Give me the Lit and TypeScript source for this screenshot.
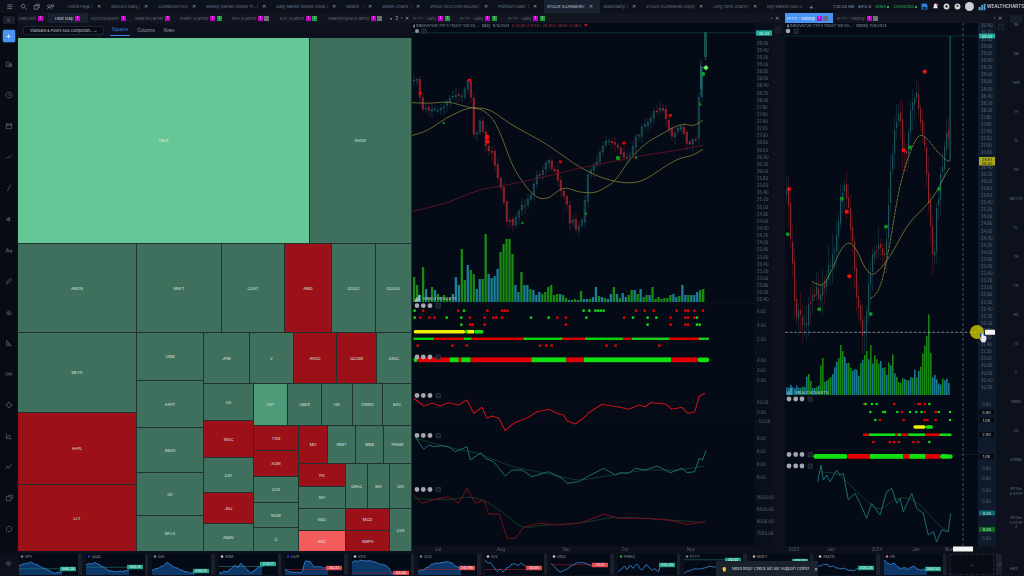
import { LitElement, html, svg, css, nothing } from "lit";
import { customElement } from "lit/decorators.js";

type P = [number, number];
const mk = (ox: number, oy: number) => (a: number[]): P[] => {
  const r: P[] = [];
  for (let i = 0; i < a.length; i += 2) r.push([ox + a[i] / 3, oy + a[i + 1] / 3]);
  return r;
};
const z5 = mk(412, 30), z6 = mk(412, 290), z7 = mk(775, 20), z8 = mk(775, 290);
const lerp = (pts: P[], x: number) => {
  if (x <= pts[0][0]) return pts[0][1];
  for (let i = 1; i < pts.length; i++) {
    if (x <= pts[i][0]) {
      const t = (x - pts[i - 1][0]) / (pts[i][0] - pts[i - 1][0]);
      return pts[i - 1][1] + t * (pts[i][1] - pts[i - 1][1]);
    }
  }
  return pts[pts.length - 1][1];
};
const seed = (s: number) => () => {
  s = (s + 0x6d2b79f5) | 0;
  let t = Math.imul(s ^ (s >>> 15), 1 | s);
  t = (t + Math.imul(t ^ (t >>> 7), 61 | t)) ^ t;
  return ((t ^ (t >>> 14)) >>> 0) / 4294967296;
};
const smooth = (pts: P[], step = 3): P[] => {
  const o: P[] = [];
  for (let x = pts[0][0]; x <= pts[pts.length - 1][0]; x += step) {
    let sum = 0, n = 0;
    for (let d = -6; d <= 6; d += 3) { sum += lerp(pts, Math.min(pts[pts.length - 1][0], Math.max(pts[0][0], x + d))); n++; }
    o.push([x, sum / n]);
  }
  return o;
};
const line = (pts: P[], c: string, w = 0.7, extra = "") =>
  svg`<polyline points=${pts.map((p) => p[0].toFixed(1) + "," + p[1].toFixed(1)).join(" ")} fill="none" stroke=${c} stroke-width=${w} stroke-dasharray=${extra || "none"} stroke-linejoin="round"></polyline>`;
const RED = "#e80000", GRN = "#10d810";
const dots = (y: number, ox: number, red: number[], grn: number[], r = 1.35) => svg`
  ${red.map((x) => svg`<circle cx=${ox + x / 3} cy=${y} r=${r} fill=${RED}></circle>`)}
  ${grn.map((x) => svg`<circle cx=${ox + x / 3} cy=${y} r=${r} fill=${GRN}></circle>`)}`;
const band = (y: number, ox: number, segs: [number, number, string][]) =>
  segs.map(([a, b, c]) => {
    const out = [];
    for (let x = a; x < b; x += 6) out.push(svg`<rect x=${ox + x / 3} y=${y - 1.2} width="2.2" height="2.4" rx="0.7" fill=${c}></rect>`);
    return out;
  });
const bar = (y: number, ox: number, h: number, segs: [number, number, string][]) =>
  segs.map(([a, b, c], i) => svg`<rect x=${ox + a / 3} y=${y - h / 2} width=${(b - a) / 3} height=${h} rx=${i === 0 || i === segs.length - 1 ? h / 2 : 0} fill=${c}></rect>`);
const cluster = (xs: number[], y: number, sq: number) => svg`
  ${xs.map((x) => svg`<circle cx=${x} cy=${y} r="2.4" fill="#a4a8ae"></circle>`)}
  <rect x=${sq - 2} y=${y - 2} width="4.4" height="4.4" fill="#181e2a" stroke="#3c4350" stroke-width="0.5"></rect>`;
const axLabels = (x: number, items: [string, number][]) =>
  items.map(([t, y]) => svg`<text class="ax" x=${x} y=${y + 1.6}>${t}</text>`);
const tag = (x: number, y: number, w: number, h: number, t: string, bg: string, fg = "#06201c") => svg`
  <rect x=${x} y=${y - h / 2} width=${w} height=${h} fill=${bg}></rect>
  <text class="tg" x=${x + w / 2} y=${y + 1.6} text-anchor="middle" fill=${fg}>${t}</text>`;

/* -------------- daily chart data ------------- */
const dailyClose = z5([5,150,15,140,25,240,45,240,70,240,100,220,120,195,150,200,165,150,175,210,185,340,205,260,215,340,240,380,270,490,280,570,300,580,320,540,350,510,370,440,410,395,430,440,460,520,470,570,490,590,510,570,525,440,550,400,570,340,610,340,620,370,650,380,665,330,690,295,720,255,745,235,775,320,800,285,825,350,850,320,860,180,872,100]);
const dailyCandles = (() => {
  const r = seed(11), out: any[] = [];
  let prev = lerp(dailyClose, 412);
  for (let x = 413; x < 703; x += 3) {
    const c = lerp(dailyClose, x) + (r() - 0.5) * 6;
    const o = prev + (r() - 0.5) * 3;
    const hi = Math.min(o, c) - 2 - r() * 5, lo = Math.max(o, c) + 2 + r() * 6;
    out.push(svg`<line x1=${x + 1} x2=${x + 1} y1=${hi} y2=${lo} stroke=${c > o ? "#6a1c24" : "#1a4c54"} stroke-width="0.6"></line>
      <rect x=${x} y=${Math.min(o, c)} width="1.8" height=${Math.max(1, Math.abs(c - o))} fill=${c > o ? "#7c1a24" : "#103a40"} stroke=${c > o ? "#a82a34" : "#215c63"} stroke-width="0.4"></rect>`);
    prev = c;
  }
  return out;
})();
const dailyVol = [25,17,7,35,13,5,15,12,8,5,7,3,4,8,25,17,53,22,37,32,28,13,23,23,68,28,24,26,33,50,58,63,63,48,17,10,30,17,17,13,12,7,10,8,10,15,17,7,8,8,7,4,2,2,3,2,11,3,3,3,5,15,6,5,4,3,8,15,8,4,9,5,7,12,12,8,13,5,7,7,15,3,5,3,4,4,7,8,5,6,17,7,7,7,7,10,12,13];
const dailyVolBars = (() => {
  const r = seed(5);
  return dailyVol.map((h, i) => {
    const teal = h < 50 && r() < 0.5 && h !== 68;
    return svg`<rect x=${413 + i * 2.98} y=${302 - h} width="2.3" height=${h} fill=${teal ? "#1b7f96" : "#1a8a12"}></rect>`;
  });
})();
const dailyAxis: [string, number][] = (() => {
  const a: [string, number][] = [];
  for (let i = 0; i < 37; i++) a.push([(29.6 - i * 0.2).toFixed(2), 43 + i * 7.13]);
  return a;
})();

/* -------------- weekly chart data ------------- */
const wkClose: P[] = [[787,197],[790,233],[793,290],[797,315],[805,320],[812,290],[820,300],[828,270],[835,240],[840,205],[845,190],[850,230],[853,260],[858,310],[863,335],[868,290],[873,250],[880,240],[885,260],[890,170],[895,110],[900,130],[905,160],[910,110],[915,90],[920,120],[925,160],[930,230],[933,265],[937,200],[942,170],[947,120],[950,150]];
const wkCandles = (() => {
  const r = seed(23), out: any[] = [];
  let prev = lerp(wkClose, 786);
  for (let x = 786; x < 950; x += 2) {
    const c = lerp(wkClose, x) + (r() - 0.5) * 18;
    const o = prev + (r() - 0.5) * 6;
    const hi = Math.min(o, c) - 4 - r() * 16, lo = Math.max(o, c) + 4 + r() * 18;
    const red = c > o;
    out.push(svg`<line x1=${x + 0.6} x2=${x + 0.6} y1=${hi} y2=${lo} stroke=${red ? "#5a1a20" : "#163e46"} stroke-width="0.6"></line>
      <rect x=${x} y=${Math.min(o, c)} width="1.2" height=${Math.max(1, Math.abs(c - o))} fill=${red ? "#8a252b" : "#1c535a"}></rect>`);
    prev = c;
  }
  return out;
})();
const wkEnv: P[] = [[35,12],[90,10],[95,26],[110,12],[130,10],[138,68],[146,15],[170,25],[185,45],[200,55],[215,35],[240,25],[260,35],[270,48],[290,55],[310,40],[330,28],[350,50],[370,20],[400,15],[435,38],[445,50],[455,80],[462,93],[472,25],[490,12],[505,20],[527,22]];
const wkVolBars = (() => {
  const r = seed(9), o: any[] = [];
  for (let x = 786; x < 950; x += 2) {
    const h = lerp(wkEnv, (x - 775) * 3) * (0.55 + r() * 0.45);
    const green = h > 40 || r() < 0.45;
    o.push(svg`<rect x=${x} y=${395 - h} width="1.6" height=${h} fill=${green ? "#1a8412" : "#1a7790"}></rect>`);
  }
  return o;
})();
const wkAxis: [string, number][] = (() => {
  const a: [string, number][] = [];
  for (let i = 0; i < 52; i++) a.push([(30.4 - i * 0.2).toFixed(2), 25 + i * 7.1]);
  return a;
})();
const G = "#10e010", R = "#e40000", Y = "#f0f000";

const dailySvg = () => html`<svg class="chart" viewBox="412 23 373 530">
  <rect x="412" y="23" width="373" height="530" fill="#0c111d"></rect>
  <rect x="412" y="23" width="343" height="523" fill="#050a17"></rect>
  <rect x="755" y="23" width="17" height="523" fill="#0a0f1c"></rect>
  <line x1="412" x2="756" y1="32.7" y2="32.7" stroke="#14484a" stroke-width="0.6"></line>
  ${dailyCandles}
  ${line(smooth(z5([0,218,50,220,110,215,170,232,220,240,260,290,300,410,360,495,400,512,430,490,455,467,490,485,550,490,610,455,650,390,700,340,770,300,810,280,830,285,855,290,880,258])), "#8c8c38", 0.7)}
  ${line(smooth(z5([0,318,50,300,100,265,170,232,230,236,300,285,400,340,500,410,560,440,610,455,660,460,700,450,750,415,800,385,850,375,880,350])), "#8c8c38", 0.7)}
  ${line(smooth(z5([0,545,100,520,200,480,300,462,400,440,500,415,600,395,700,375,800,360,880,345])), "#6d1524", 0.8)}
  <rect x="704" y="32" width="3" height="25" fill="#15514f"></rect>
  <line x1="705.5" x2="705.5" y1="57" y2="60" stroke="#3b7f80" stroke-width="0.6"></line>
  <rect x="700" y="66" width="2.4" height="23" fill="#1c5f66"></rect>
  <line x1="700.8" x2="700.8" y1="60" y2="95" stroke="#2a7078" stroke-width="0.6"></line>
  ${z5([25,190,173,152,445,396,636,340,775,257]).map((p) => svg`<path d="M${p[0] - 1.6} ${p[1] - 1.6}h3.2v1.6l-1.6 1.8l-1.6-1.8z" fill="#ee0000"></path>`)}
  <circle cx="487.3" cy="137" r="2.3" fill="#f01010"></circle><circle cx="487.3" cy="141.5" r="2.3" fill="#f01010"></circle>
  ${z5([95,278,331,578,522,550,672,382,865,222]).map((p) => svg`<path d="M${p[0]} ${p[1] - 2}l1.5 3.4h-3z" fill="#0f8a1a"></path>`)}
  <circle cx="618" cy="158" r="2.2" fill="#0c9a20"></circle>
  <circle cx="703" cy="74" r="2.2" fill="#0c9a20"></circle>
  <path d="M706 65l2.6 2.7l-2.6 2.7l-3-2.7z" fill="#62f062"></path>
  ${dailyVolBars}
  <path d="M415 302v-3l1.5-1v-1l1.5 1v-2.500l2 -1v7z" fill="#bcd0d8" opacity="0.8"></path>
  <text class="wm" x="423" y="300">WEALTHCHARTS</text>
  <line x1="412" x2="756" y1="303" y2="303" stroke="#121a28" stroke-width="0.5"></line>
  ${cluster([417, 423.3, 430], 305.7, 438)}
  ${dots(310.7, 412, [33,139,226,270,278,287,672,698,725,794,820,828,847,873], [8,156,515,532,550,558,566,575])}
  ${dots(317.7, 412, [25,52,68,174,218,244,253,270,436,462,636,776,820,828,847], [8,104,148,357,410,523,663,707,733,855])}
  ${dots(324.7, 412, [174,182,218,462,776,820,828], [148,707,855,863])}
  ${bar(331.7, 412, 3.6, [[5,160,Y],[160,166,G],[166,186,Y],[186,215,G]])}
  ${band(338.7, 412, [[5,65,G],[65,155,R],[155,178,G],[178,335,R],[335,450,G],[450,520,R],[520,632,G],[632,660,R],[660,772,G],[772,860,R],[860,886,G]])}
  ${dots(345.7, 412, [17,121,165,384,402,419,584,611,742], [])}
  ${bar(359.8, 412, 4.8, [[5,17,G],[17,113,R],[113,140,G],[140,148,R],[148,176,G],[176,358,R],[358,463,G],[463,515,R],[515,778,G],[778,856,R],[856,892,G]])}
  ${cluster([417, 423.3, 430], 357, 438)}
  ${[402, 412, 421].map((y) => svg`<line x1="412" x2="755" y1=${y} y2=${y} stroke="#1a1420" stroke-width="0.5"></line>`)}
  ${cluster([417, 423.3, 430], 395.5, 438)}
  ${line(z6([5,325,35,348,60,340,85,347,110,338,140,345,165,330,185,370,210,352,225,385,240,378,260,385,280,422,298,405,315,395,350,382,375,365,410,358,440,372,455,375,465,392,490,402,510,388,535,365,570,343,600,348,625,352,650,358,680,345,700,350,715,338,760,342,780,358,810,352,828,370,848,366,862,318,880,310]), "#c01018", 1.1)}
  ${cluster([417, 423.3, 430], 435.500, 438)}
  ${line(smooth(z6([12,445,100,470,200,490,300,530,400,550,500,572,600,555,700,540,800,540,880,528])), "#14482a", 0.8)}
  ${line(z6([12,445,35,478,50,465,65,470,90,467,110,470,130,485,165,470,175,510,207,488,220,505,245,515,280,558,300,540,330,540,360,560,410,545,450,565,465,580,500,575,530,558,575,535,610,555,625,548,650,550,670,535,700,540,735,528,775,548,810,535,825,548,848,545,862,505,872,510,882,480]), "#1c6c72", 1)}
  ${cluster([417, 423.3, 430], 489.500, 438)}
  ${line(smooth(z6([5,625,100,630,170,620,215,630,270,665,330,715,400,705,500,700,600,682,700,685,800,692,880,698])), "#14482a", 0.8)}
  ${line(z6([5,615,30,640,60,630,110,620,140,640,165,595,190,640,215,630,230,672,262,672,285,745,310,745,335,712,380,700,440,705,500,700,530,690,575,672,620,685,700,685,770,690,825,703,850,700,880,695]), "#761018", 1)}
  ${axLabels(757, dailyAxis)}
  ${axLabels(757, [["6.00",311],["4.00",325],["2.00",339],["4.00",360],["3.00",370],["2.00",380],["50.00",402],["0.00",412],["-50.00",421],["8.00",438],["8.00",451],["8.00",464],["8.00",477],["9000.00",497],["8500.00",509],["8000.00",521],["7500.00",533]])}
  ${tag(756, 33, 16, 5.4, "30.28", "#1ea79a", "#d0f5ee")}
  <rect x="775" y="27" width="6" height="6" fill="#141a26" stroke="#2a313e" stroke-width="0.4"></rect>
  <circle cx="417" cy="31" r="2" fill="#8f939b"></circle>
  <rect x="422" y="29" width="4.400" height="4.400" fill="#181e2a" stroke="#3c4350" stroke-width="0.5"></rect>
  <text class="ttl" x="413" y="26.500"><tspan fill="#8e94a0">▮ INNOVATOR (TFFS TRUST 100 50...</tspan><tspan fill="#8e94a0"> - Daily</tspan><tspan fill="#8e94a0" dx="2">11/6/2024</tspan><tspan fill="#a83b40" dx="2">O 26.80 H 27.14 L 26.49 C 26.80 -0.46%</tspan><tspan fill="#d02020" dx="2">▼</tspan></text>
  ${[["Jul",438],["Aug",501],["Sep",566],["Oct",625],["Nov",691]].map(([t, x]) => svg`<text class="ax" x=${x} y="551" text-anchor="middle">${t}</text>`)}
</svg>`;

const weeklySvg = () => html`<svg class="chart" viewBox="785 23 223 530">
  <rect x="785" y="23" width="223" height="530" fill="#0c111d"></rect>
  <rect x="785" y="23" width="193" height="523" fill="#050a17"></rect>
  <rect x="978" y="23" width="18" height="523" fill="#0f1a2c"></rect>
  <line x1="785" x2="980" y1="36" y2="36" stroke="#14484a" stroke-width="0.6"></line>
  ${wkCandles}
  <rect x="949.5" y="36" width="1.3" height="125" fill="#145a56"></rect>
  ${line(smooth(z7([110,770,125,810,160,780,190,700,210,665,235,665,260,720,280,775,315,750,345,710,400,610,460,550,490,510,525,430]), 2), "#94943a", 0.7)}
  ${line(smooth(z7([285,830,300,850,340,720,355,600,375,480,395,430,420,350,445,335,465,370,480,385,500,410,525,430]), 2), "#a0a040", 0.7, "3 0.7")}
  ${z7([42,507,215,575,223,769,386,391,449,155]).map((p) => svg`<circle cx=${p[0]} cy=${p[1]} r="2.1" fill="#f01010"></circle>`)}
  ${[...z7([38,643,200,536,333,620,405,382,492,507]), ...z8([133,58,287,72])].map((p) => svg`<circle cx=${p[0]} cy=${p[1]} r="2" fill="#0c9420"></circle>`)}
  ${wkVolBars}
  <path d="M787 395v-3l1.500-1v-1l1.500 1v-2.500l2-1v7.500z" fill="#5a9ab0" opacity="0.8"></path>
  <text class="wm" x="795" y="393.500">WEALTHCHARTS</text>
  ${cluster([789, 795.7, 802], 399, 810)}
  ${dots(404, 775, [268,358,430,435,450], [272,291,305,463])}
  ${dots(412, 775, [381,449,482], [286,325,330,367,405,424,440,491,525])}
  ${dots(420, 775, [315,386,449,457,482], [301,525])}
  ${bar(427, 775, 3.600, [[415,452,Y],[452,474,G]])}
  ${bar(434.700, 775, 2.600, [[263,282,R],[282,362,G],[362,368,R],[368,378,G],[378,400,R],[400,450,G],[450,492,R],[492,530,G]])}
  ${dots(442, 775, [295,344,358,372,415,430], [463])}
  ${cluster([789, 795.7, 802], 454.500, 810)}
  ${bar(456.400, 775, 4.800, [[115,218,G],[218,285,R],[285,385,G],[385,403,R],[403,452,G],[452,495,R],[495,533,G]])}
  <line x1="946" x2="996" y1="454.500" y2="454.500" stroke="#222a38" stroke-width="0.4"></line>
  ${cluster([789, 795.7, 802], 466, 810)}
  ${line(smooth(z8([135,545,190,550,250,610,310,665,370,620,420,630,460,670,500,715,520,725]), 2), "#14482a", 0.8)}
  ${line(z8([128,575,138,525,145,570,155,555,165,575,185,540,195,555,205,550,220,630,240,610,255,640,275,685,290,640,315,675,335,605,350,595,365,640,375,625,385,665,410,610,425,655,445,670,460,735,475,725,485,755,500,720,520,725,527,670]), "#1c6c72", 1)}
  <line x1="963" x2="963" y1="23" y2="546" stroke="#8a8f98" stroke-width="0.5" stroke-dasharray="3 2"></line>
  <line x1="785" x2="978" y1="332.300" y2="332.300" stroke="#c4c8cc" stroke-width="0.6" stroke-dasharray="3 1.600"></line>
  ${axLabels(981, wkAxis.slice(0, 52))}
  ${[["0.00",404],["0.00",468],["0.00",478],["0.00",490],["0.00",501],["0.00",512],["0.00",538]].map(([t, y]) => svg`<text class="ax" x="982" y=${(y as number) + 1.6}>${t}</text>`)}
  ${[["5.00",412],["1.00",420],["2.00",434.5],["1.00",456.5]].map(([t, y]) => svg`<rect x="979" y=${(y as number) - 2.4} width="15" height="4.800" fill="#070a12"></rect><text class="tg" x="986.500" y=${(y as number) + 1.6} text-anchor="middle" fill="#c8ccd2">${t}</text>`)}
  ${tag(979, 36, 16, 4.800, "30.03", "#1ea79a", "#d0f5ee")}
  <rect x="979" y="157" width="16" height="8.500" fill="#a8a81c"></rect>
  <text class="tg" x="987" y="160.500" text-anchor="middle" fill="#24240a">26.61</text>
  <text class="tg" x="987" y="164.500" text-anchor="middle" fill="#24240a">26.52</text>
  ${tag(979, 513, 16, 4.800, "0.05", "#106a72", "#b8e8e8")}
  ${tag(979, 529.500, 16, 4.800, "0.05", "#0f6a20", "#b8e8c0")}
  <circle cx="977" cy="332" r="7" fill="#c8c800" opacity="0.82"></circle>
  <rect x="985" y="329.700" width="10" height="5" rx="0.500" fill="#f4f4f4"></rect>
  <path d="M980.500 333.500l3 .300v1.700l2.600.800.400 3.200-1.300 2.800h-3.500l-2-3.700 1.100-.300.600 1z" fill="#e8e8ee"></path>
  <path d="M979.800 333l1.700.200v3.600h-1.700z" fill="#2a50c0"></path>
  <rect x="998" y="24" width="6" height="6" fill="#141a26" stroke="#2a313e" stroke-width="0.4"></rect>
  <circle cx="788" cy="31" r="2.300" fill="#a4a8ae"></circle>
  <rect x="794" y="29" width="4.400" height="4.400" fill="#181e2a" stroke="#3c4350" stroke-width="0.5"></rect>
  <text class="ttl" x="787" y="26.500" fill="#8e94a0">▮ INNOVATOR (TFFS TRUST 100 50...  - Weekly  11/6/2024</text>
  ${[["2023",794],["Jun",831],["2024",877],["Jun",916],["Nov",949]].map(([t, x]) => svg`<text class="ax" x=${x} y="551" text-anchor="middle">${t}</text>`)}
  <rect x="953" y="546.500" width="20" height="5" fill="#f4f4f4"></rect>
</svg>`;

/* -------------- treemap ------------- */
type T = { t?: string; k?: string; s: number; d?: "row" | "col"; c?: T[] };
const L = (t: string, s: number, k = "g"): T => ({ t, s, k });
const Rw = (s: number, c: T[]): T => ({ d: "row", s, c });
const Cl = (s: number, c: T[]): T => ({ d: "col", s, c });
const tree: T = Cl(513, [
  Rw(205, [L("TSLA", 291, "l"), L("NVDA", 101)]),
  Rw(88, [L("AMZN", 118), L("MSFT", 84), L("COST", 62), L("AMD", 46, "r"), L("GOOG", 43), L("GOOGL", 35)]),
  Rw(218, [
    Cl(118, [L("META", 79), L("AAPL", 71, "r"), L("LLY", 66, "r")]),
    Cl(66, [L("CRM", 47), L("AAPT", 46), L("ABAX", 44), L("GE", 42), L("NFLX", 35)]),
    Cl(207, [
      Rw(50, [L("JPM", 45), L("V", 43), L("AVGO", 42, "r"), L("QCOM", 39, "r"), L("ORCL", 34)]),
      Rw(167, [
        Cl(49, [L("GS", 36), L("INVC", 36, "r"), L("CAT", 34), L("JNJ", 30, "r"), L("ABBV", 27)]),
        Cl(157, [
          Rw(41, [L("VST", 33, "v"), L("UBER", 33), L("HD", 30), L("CRWD", 29), L("BAC", 28)]),
          Rw(125, [
            Cl(44, [L("TXN", 24, "r"), L("XOM", 25, "r"), L("CVX", 25), L("NOW", 24), L("C", 23)]),
            Cl(112, [
              Rw(37, [L("MU", 28, "r"), L("WMT", 27), L("WBB", 27), L("PANW", 27)]),
              Rw(87, [
                Cl(46, [L("PG", 22, "r"), L("NFI", 21), L("EBO", 21), L("SNC", 20, "s")]),
                Cl(65, [
                  Rw(44, [L("ORAC", 21), L("MA", 21), L("DIS", 21)]),
                  Rw(42, [Cl(43, [L("MCD", 21, "r"), L("SMPH", 20, "r")]), L("CVS", 21)]),
                ]),
              ]),
            ]),
          ]),
        ]),
      ]),
    ]),
  ]),
]);
const renderNode = (n: T): unknown => {
  const basis = `flex-basis:${n.s}px`;
  if (n.c) return html`<div class="node ${n.d}" style=${basis}>${n.c.map((c) => renderNode(c))}</div>`;
  return html`<div class="tile ${n.k}" style=${basis}>${n.t}</div>`;
};

/* -------------- thumbnails ------------- */
type Th = { n: string; v: number[]; tag: string; col: string; ty: number; ic: string; area: boolean; hl?: number; hc?: string };
const TEAL = "#1ea68f", RD = "#e04a4f";
const thumbs: Th[] = [
  { n: "SPY", v: [.6,.62,.7,.75,.8,.7,.6,.5,.4,.3,.2,.1,.05,.1,.15], tag: "568.28", col: TEAL, ty: 15, ic: "#7d8490", area: true, hl: .35, hc: "#1e7a70" },
  { n: "QQQ", v: [.6,.7,.65,.75,.7,.5,.45,.3,.2,.2,.15,.2,.15,.2,.3], tag: "504.16", col: TEAL, ty: 13, ic: "#2b2bd0", area: true, hl: .45, hc: "#1e7a70" },
  { n: "DIA", v: [.25,.3,.35,.5,.6,.75,.6,.5,.4,.3,.2,.15,.1,.08,.1], tag: "440.12", col: TEAL, ty: 17, ic: "#7d8490", area: true },
  { n: "IWM", v: [.1,.05,.2,.15,.3,.5,.6,.45,.7,.55,.35,.2,.1,.2,.35,.5,.45], tag: "234.11", col: TEAL, ty: 10, ic: "#c8ccd0", area: true, hl: .5, hc: "#1e7a70" },
  { n: "UUP", v: [.25,.2,.15,.1,.15,.05,.1,.85,.85,.8,.5,.45,.5,.4,.42,.4], tag: "28.32", col: RD, ty: 14, ic: "#3030d0", area: true, hl: .3, hc: "#a01820" },
  { n: "VXX", v: [.8,.85,.85,.9,.85,.9,.8,.75,.7,.65,.6,.4,.1,.05], tag: "44.00", col: RD, ty: 19, ic: "#c8ccd0", area: true, hl: .08, hc: "#a01820" },
  { n: "GLD", v: [.2,.25,.4,.6,.75,.7,.8,.85,.7,.5,.3], tag: "247.95", col: RD, ty: 14, ic: "#7d8490", area: true, hl: .3, hc: "#a01820" },
  { n: "SLV", v: [.9,.7,.75,.4,.2,.3,.15,.4,.5,.7,.65,.6,.7,.5,.35], tag: "28.85", col: RD, ty: 14, ic: "#c8ccd0", area: false, hl: .3, hc: "#a01820" },
  { n: "UNG", v: [.7,.4,.15,.2,.4,.6,.7,.8,.7,.6,.5], tag: "73.12", col: RD, ty: 11, ic: "#c8ccd0", area: false, hl: .62, hc: "#a01820" },
  { n: "PMAG", v: [.1,.3,.55,.3,.6,.4,.7,.4,.25,.6,.5,.2,.35,.1,.6], tag: "513.46", col: TEAL, ty: 11, ic: "#2ca040", area: false },
  { n: "FFTY", v: [.05,.2,.3,.35,.3,.45,.5,.45,.55,.7,.95], tag: "30.03", col: TEAL, ty: 6, ic: "#7d8490", area: false, hl: .95, hc: "#1e7a70" },
  { n: "MSFT", v: [.4,.5,.7,.6,.4,.5,.3,.5,.6], tag: "418.20", col: TEAL, ty: 7, ic: "#c8b890", area: false },
  { n: "AMZN", v: [.5,.55,.65,.6,.5,.55,.4,.35,.4,.3,.25,.2,.35,.3], tag: "208.24", col: TEAL, ty: 14, ic: "#c8ccd0", area: false },
  { n: "FB", v: [.9,.75,.65,.7,.5,.35,.45,.3,.4,.5,.35,.25,.3,.35], tag: "559.50", col: TEAL, ty: 15, ic: "#e06090", area: true },
];
const thumbSvg = (t: Th, i: number) => {
  const r = seed(100 + i);
  const W = 43, top = 5, H = 15;
  const pts: P[] = [];
  const N = 34;
  const base: P[] = t.v.map((v, k) => [k / (t.v.length - 1), v]);
  for (let k = 0; k <= N; k++) {
    const x = k / N;
    const v = lerp(base, x) + (r() - 0.5) * 0.09;
    pts.push([x * W, top + (1 - Math.max(0, Math.min(1, v))) * H]);
  }
  const ps = pts.map((p) => p[0].toFixed(1) + "," + p[1].toFixed(1)).join(" ");
  return html`<svg class="thumb" viewBox="0 0 59 21">
    <rect width="59" height="21" fill="#050a17"></rect>
    ${t.area ? svg`<polygon points="0,21 ${ps} ${W},21" fill="#0d3766"></polygon>` : nothing}
    ${t.hl !== undefined ? svg`<line x1="0" x2="45" y1=${top + (1 - t.hl) * H} y2=${top + (1 - t.hl) * H} stroke=${t.hc} stroke-width="0.6"></line>` : nothing}
    <polyline points=${ps} fill="none" stroke="#3f8fe0" stroke-width="0.8"></polyline>
    <circle cx="3" cy="2.500" r="1.300" fill=${t.ic}></circle>
    <text class="tl" x="6" y="4">${t.n}</text>
    <rect x="41" y=${t.ty - 2.2} width="16" height="4.400" fill=${t.col}></rect>
    <text class="tv" x="49" y=${t.ty + 1.3} text-anchor="middle">${t.tag}</text>
  </svg>`;
};

/* -------------- icons ------------- */
const ic = (d: string) => html`<svg class="ico" viewBox="0 0 12 12"><path d=${d}></path></svg>`;
const sideIcons = [
  "M2 3h3l1 1.500h2.500v5H2z M6 6.500h4v3H6z",
  "M6 1.500a4.500 4.500 0 1 0 .01 0z M6 3.500v2.500l2 1",
  "M2 3h8v7H2z M2 5h8 M4 2v2 M8 2v2",
  "M1.500 8.500l3-3 2 1.500 4-3.500",
  "M3.500 10.500l5-9",
  "M2 7l3-3 2 2-3 3z M7 4a2.500 2.500 0 1 0 .01 5z",
  "M1.500 9.500l2.200-6 2.200 6 M2.400 7.500h2.600 M7 7.500a1.500 1.500 0 1 0 3 0 1.500 1.500 0 1 0-3 0 M10 6v3.500",
  "M2 10l1-3 5-5 2 2-5 5z",
  "M2 8l2-2 4 4-2 0z M4 6l2-2 4 4-2 2z",
  "M2.500 2v8h7z M4.500 6.500v1.500h1.500z",
  "M3.500 4a2 2 0 1 0 0 4c2 0 3-4 5-4a2 2 0 1 1 0 4c-2 0-3-4-5-4",
  "M6 2.500a3.500 3.500 0 1 0 .01 0z M6 1v2 M6 9v2 M1 6h2 M9 6h2",
  "M2 2v8h8 M4 8v-2 M6 8v-4 M8 8v-3",
  "M1.500 9l2-4 2 3 2-4 3-2 M3.500 5v.01 M5.500 8v.01",
  "M2 4h7v6H2z M4 2h7v6",
  "M6 2a4 4 0 1 0 .01 0z",
];

const topTabs: [string, number][] = [
  ["Home Page", 43],["INDICES Daily", 47],["COMMODITIES", 48],["Weekly Market Simple Tr...", 70],["Daily Market Simple Grow...", 70],["Wealth", 36],["SMMA Charts", 48],["SP500 SECTORS ROUND", 68],["Premium Dash", 49],["STOCK SCANNERS", 56],["Seasonality", 43],["STOCK SCANNERS Copy", 67],["Long Term Charts", 54],
];
const subTabs: { n: string; b: string[]; a?: boolean; w: number; p: number }[] = [
  { n: "Watchlist", b: ["p"], w: 31, p: 2 },
  { n: "Heat Map", b: ["p"], a: true, w: 40, p: 7 },
  { n: "SectorScanner", b: ["p"], w: 42, p: 3 },
  { n: "WealthScanner", b: ["p"], w: 45, p: 5 },
  { n: "Power Scanner", b: ["p", "g"], w: 52, p: 5 },
  { n: "WSI Scanner", b: ["p", "h"], w: 48, p: 5 },
  { n: "EAT Scanner", b: ["p", "g"], w: 48, p: 5 },
  { n: "WealthSignal Scanner", b: ["p", "h"], w: 60, p: 5 },
];
const rail = ["1M","3M","15M","1H","1D","1W","1M/YTD","YL","TA","FR","RD","1.5","0","SWIN","ZD","ADRBE","W/10m S.STOP","W/15m S.STOP 2"];

@customElement("app-root")
export class AppRoot extends LitElement {
  static styles = css`
    :host { display: block; width: 1024px; height: 576px; overflow: hidden; background: #0c111d; font-family: Inter, "Liberation Sans", sans-serif; }
    .app { position: relative; width: 1024px; height: 576px; display: flex; flex-direction: column; filter: blur(0.35px); }
    .ico { width: 8px; height: 8px; flex: none; }
    .ico path { fill: none; stroke: #6b7484; stroke-width: 0.9; }
    .top { height: 13px; flex: none; display: flex; align-items: center; background: #0c111c; font-size: 4px; color: #6a7484; white-space: nowrap; }
    .tools { width: 65px; flex: none; display: flex; align-items: center; gap: 6px; padding-left: 6px; box-sizing: border-box; }
    .tools .ico { width: 7.500px; height: 7.500px; }
    .tools .ico path { stroke: #a8aeb8; }
    .tt { display: flex; align-items: center; height: 13px; padding: 0 7px 0 3px; box-sizing: border-box; flex: none; }
    .tt.on { background: #1a2130; color: #c4c9d2; }
    .tt .nm { flex: 1; min-width: 0; }
    .tt .sep { margin: 0 4px 0 0; color: #5a6270; }
    .tt .x { color: #a0a6b0; font-size: 4.500px; }
    .lastt { padding-left: 3px; flex: none; width: 43px; box-sizing: border-box; }
    .plus { color: #a0a6b0; font-size: 7px; margin-left: 2px; }
    .status { margin-left: auto; display: flex; align-items: center; gap: 4px; font-size: 3.900px; color: #98a0ac; }
    .status .gd { color: #2fa656; }
    .status .dot { display: inline-block; width: 2.500px; height: 2.500px; border-radius: 50%; background: #2ee06c; margin-left: 1px; }
    .status svg { width: 7px; height: 7px; flex: none; }
    .logo { color: #c8ccd4; font-weight: 600; font-size: 4.400px; display: flex; gap: 1px; align-items: center; }
    .body { height: 540px; flex: none; display: flex; }
    .side { width: 17px; flex: none; display: flex; flex-direction: column; align-items: center; padding-top: 3px; box-sizing: border-box; background: #080b14; }
    .collapse { width: 12px; height: 8px; background: #1a1f2c; color: #5e6676; font-size: 6px; line-height: 8px; text-align: center; border-radius: 1px; }
    .add { width: 12px; height: 12px; margin: 6px 0 8px; background: #4a93f2; border-radius: 1px; color: #e8f2ff; font-size: 9px; line-height: 12px; text-align: center; box-shadow: 0 0 2px #4a93f2; }
    .sicons { display: flex; flex-direction: column; align-items: center; gap: 23px; margin-top: 10px; }
    .heat { width: 395px; flex: none; display: flex; flex-direction: column; }
    .strip { height: 10px; flex: none; display: flex; align-items: center; font-size: 4px; color: #5f6978; white-space: nowrap; background: #10151f; overflow: hidden; }
    .st { display: flex; align-items: center; gap: 1.500px; height: 10px; box-sizing: border-box; flex: none; }
    .st.on { background: #1a2130; color: #c4c9d2; }
    .bd { width: 5px; height: 5px; font-size: 3.500px; line-height: 5px; text-align: center; color: #f8d0f8; flex: none; }
    .bd.p { background: #c600c6; }
    .bd.g { background: #17a13c; color: #d0f5d0; }
    .bd.h { background: #6c7078; color: #e0e0e0; }
    .wicons { margin-left: auto; display: flex; gap: 2.500px; padding-right: 3px; color: #9aa0aa; font-size: 5px; }
    .bar { height: 15px; flex: none; display: flex; align-items: center; padding-left: 6px; font-size: 4.200px; color: #98a0ac; background: #0c111d; white-space: nowrap; }
    .dd { width: 81px; height: 9px; background: #080b14; border: 0.500px solid #20262f; border-radius: 2px; display: flex; align-items: center; justify-content: space-between; padding: 0 6px; box-sizing: border-box; color: #c4c8d0; margin-right: 6px; font-size: 3.800px; flex: none; }
    .vt { padding: 0 2px 1px; margin-right: 5px; height: 9px; line-height: 9px; }
    .vt.on { color: #3e86e6; border-bottom: 1px solid #3e86e6; }
    .map { padding-left: 1px; display: flex; }
    .node { display: flex; flex: none; gap: 1px; }
    .node.row { flex-direction: row; }
    .node.col { flex-direction: column; }
    .map > .node { width: 393px; height: 513px; background: #1f3331; }
    .row > .node.col, .row > .tile { height: 100%; }
    .col > .node.row, .col > .tile { width: 100%; }
    .tile { flex: none; display: flex; align-items: center; justify-content: center; font-size: 4px; color: #dde5e1; background: #3f6f5d; overflow: hidden; }
    .tile.l { background: #65c796; color: #f2fbf6; }
    .tile.v { background: #4f9a78; }
    .tile.r { background: #9c1118; }
    .tile.s { background: #f45b5b; }
    .pane { flex: none; display: flex; flex-direction: column; height: 540px; }
    .chart { display: block; width: 100%; flex: 1; min-height: 0; }
    .chart .ax { font-size: 4.200px; fill: #5f6775; }
    .chart .tg { font-size: 4px; }
    .chart .wm { font-size: 4px; font-weight: 600; fill: #9ea8b4; }
    .chart .ttl { font-size: 3.700px; }
    .tbtab { background: #4a93f2; color: #e8f2ff; height: 10px; width: 48px; flex: none; display: flex; align-items: center; gap: 1.500px; padding-left: 2px; box-sizing: border-box; }
    .tb2 { display: flex; align-items: center; gap: 1.500px; padding-left: 4px; }
    .rail { width: 16px; flex: none; background: #0c111d; display: flex; flex-direction: column; align-items: center; padding-top: 2px; box-sizing: border-box; }
    .rbox { width: 12px; height: 8px; background: #181e2a; flex: none; }
    .rl { width: 16px; height: 29px; flex: none; font-size: 3.600px; line-height: 4.500px; color: #6a7280; text-align: center; }
    .rl:first-of-type { margin-top: 5px; }
    .foot { height: 23px; flex: none; display: flex; align-items: flex-start; padding-top: 1px; box-sizing: border-box; background: #0c111d; }
    .gear { width: 19px; flex: none; display: flex; justify-content: center; padding-top: 6px; padding-right: 3px; box-sizing: border-box; }
    .gear .ico { width: 7px; height: 7px; }
    .tcard { width: 62.500px; margin-right: 4px; height: 21px; flex: none; display: flex; }
    .thumb { width: 59px; height: 21px; flex: none; display: block; }
    .thumb .tl { font-size: 3.800px; fill: #8e96a2; }
    .thumb .tv { font-size: 3.800px; fill: #f0f4f4; }
    .grip { width: 3.500px; background: #1a202c; }
    .empty { width: 44px; height: 21px; flex: none; background: #070b14; border: 0.500px dashed #20262f; box-sizing: border-box; display: flex; align-items: center; justify-content: center; color: #3a414e; font-size: 6px; margin-right: 2px; }
    .grip2 { width: 6px; height: 21px; background: #1a202c; flex: none; display: flex; align-items: center; justify-content: center; }
    .grip2 .ico { width: 5px; height: 5px; }
    .footr { width: 24px; flex: none; font-size: 4px; color: #6a7280; display: flex; justify-content: center; padding-top: 12px; box-sizing: border-box; }
    .toast { position: absolute; left: 716px; top: 561px; width: 102px; height: 15px; background: #1c222d; display: flex; align-items: center; font-size: 3.900px; color: #d4d8de; box-sizing: border-box; padding: 0 5px; gap: 5px; white-space: nowrap; }
    .toast svg { width: 6px; height: 6px; flex: none; }
    .toast .cl { margin-left: auto; color: #c0c4cc; font-size: 5px; }
  `;

  render() {
    return html`<div class="app">
      <div class="top">
        <div class="tools">
          ${ic("M2 3h8 M2 6h8 M2 9h8")}
          ${ic("M5 2a3 3 0 1 0 .01 0z M7.500 7.500l3 3")}
          ${ic("M2 4h6v6H2z M4 2h6v6")}
          ${ic("M3 3a2 2 0 1 0 .01 0z M1 10c0-2 1.500-3 3-3s3 1 3 3 M7 3h4v3H7z")}
        </div>
        ${topTabs.map(([t, w]) => html`<div class="tt ${t === "STOCK SCANNERS" ? "on" : ""}" style="width:${w}px"><span class="nm">${t}</span><span class="sep">|</span><span class="x">✕</span></div>`)}
        <span class="lastt">Key Market Helo C</span>
        <span class="plus">+</span>
        <div class="status">
          <span>7:32:34 AM</span><span>$/FC-B</span>
          <span class="gd">Brave<i class="dot"></i></span>
          <span class="gd">Connected<i class="dot"></i></span>
          <svg viewBox="0 0 12 12"><path d="M1 1h8l2 2v8H1z" fill="#2f7fe0"></path><rect x="3" y="7" width="6" height="3" fill="#0c111c"></rect></svg>
          <svg viewBox="0 0 12 12"><path d="M6 1c-2 0-3 2-3 4v2l-1.500 2h9L9 7V5c0-2-1-4-3-4z" fill="#e8e8e8"></path><circle cx="9.500" cy="2.500" r="1.800" fill="#e03030"></circle></svg>
          <svg viewBox="0 0 12 12"><circle cx="6" cy="6" r="5" fill="#d0d0d0"></circle><circle cx="6" cy="6" r="2" fill="#0c111c"></circle></svg>
          <svg viewBox="0 0 12 12"><circle cx="6" cy="6" r="5" fill="#d0d0d0"></circle><circle cx="6" cy="5" r="1.800" fill="#4a4f58"></circle></svg>
          <svg style="width:9px;height:9px" viewBox="0 0 12 12"><circle cx="6" cy="6" r="6" fill="#cfcfcf"></circle></svg>
          <span class="logo"><svg style="width:8px;height:8px" viewBox="0 0 12 12"><path d="M1 11V6h3v5z M5 11V3h2.500v8z M8.500 11V1H11v10z" fill="#5aa7d8"></path></svg>WEALTHCHARTS</span>
        </div>
      </div>
      <div class="body">
        <div class="side">
          <div class="collapse">«</div>
          <div class="add">+</div>
          <div class="sicons">${sideIcons.map((d) => ic(d))}</div>
        </div>
        <div class="heat">
          <div class="strip">
            ${subTabs.map((t) => html`<div class="st ${t.a ? "on" : ""}" style="width:${t.w}px;padding-left:${t.p}px">${t.n}${t.b.map((b) => html`<span class="bd ${b}">${b === "h" ? "" : "1"}</span>`)}</div>`)}
            <div class="wicons"><span>▪</span><span>2</span><span>▫</span><span>✕</span></div>
          </div>
          <div class="bar">
            <div class="dd"><span>Standard &amp; Poors 500 Componen...</span><span>⌄</span></div>
            <span class="vt on">Squares</span><span class="vt">Columns</span><span class="vt">Rows</span>
          </div>
          <div class="map">${renderNode(tree)}</div>
        </div>
        <div class="pane" style="width:373px">
          <div class="strip">
            ${[0, 1, 2].map((i) => html`<div class="st" style="width:48px;padding-left:${i ? 0 : 1}px">FFTY - Daily<span class="bd p">1</span><span class="bd g">1</span></div>`)}
            <div class="wicons" style="padding-right:6px"><span>▫</span><span>✕</span></div>
          </div>
          ${dailySvg()}
        </div>
        <div class="pane" style="width:223px">
          <div class="strip">
            <div class="tbtab">FFTY - Weekly<span class="bd p">1</span><span class="bd h"></span></div>
            <div class="tb2">FFTY - Weekly<span class="bd p">1</span><span class="bd h"></span></div>
            <div class="wicons" style="padding-right:6px"><span>▫</span><span>✕</span></div>
          </div>
          ${weeklySvg()}
        </div>
        <div class="rail">
          <div class="rbox"></div>
          ${rail.map((t) => html`<div class="rl">${t}</div>`)}
        </div>
      </div>
      <div class="foot">
        <div class="gear">${ic("M6 2.500a3.500 3.500 0 1 0 .01 0z M6 4.500a1.500 1.500 0 1 0 .01 0z")}</div>
        ${thumbs.map((t, i) => html`<div class="tcard">${thumbSvg(t, i)}<div class="grip"></div></div>`)}
        <div class="empty">+</div>
        <div class="grip2">${ic("M6 2.500a3.500 3.500 0 1 0 .01 0z")}</div>
        <div class="footr">HK2</div>
      </div>
      <div class="toast">
        <svg viewBox="0 0 12 12"><path d="M3 6l1-4 1.500 1 1-1.500 1.500 1 1.500 0 .5 5-2 4H5z" fill="#f2c53a"></path></svg>
        <span>Need help? Check out our Support Center</span>
        <span class="cl">✕</span>
      </div>
    </div>`;
  }
}
